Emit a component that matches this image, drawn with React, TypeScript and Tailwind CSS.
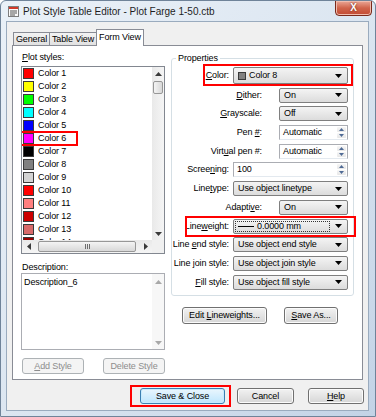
import React from "react";

const PLOT_STYLES = [
  { name: "Color 1", color: "#ff0000" },
  { name: "Color 2", color: "#ffff00" },
  { name: "Color 3", color: "#00ff00" },
  { name: "Color 4", color: "#00ffff" },
  { name: "Color 5", color: "#0000ff" },
  { name: "Color 6", color: "#ff00ff" },
  { name: "Color 7", color: "#000000" },
  { name: "Color 8", color: "#808080" },
  { name: "Color 9", color: "#d3d3d3" },
  { name: "Color 10", color: "#ff0000" },
  { name: "Color 11", color: "#ff7f7f" },
  { name: "Color 12", color: "#cc0000" },
  { name: "Color 13", color: "#d86a6a" },
  { name: "Color 14", color: "#990000" },
];

function Tri({ dir, color = "#3a3a3a" }: { dir: "up" | "down" | "left" | "right"; color?: string }) {
  const d = {
    up: "M0 4h7L3.5 0z",
    down: "M0 0h7L3.5 4z",
    left: "M4 0v7L0 3.5z",
    right: "M0 0v7L4 3.5z",
  }[dir];
  const vertical = dir === "up" || dir === "down";
  return (
    <svg width={vertical ? 7 : 4} height={vertical ? 4 : 7} viewBox={vertical ? "0 0 7 4" : "0 0 4 7"}>
      <path d={d} fill={color} />
    </svg>
  );
}

function Combo({ children }: { children?: React.ReactNode }) {
  return (
    <div className="flex h-full items-center rounded-[2px] border border-[#7f7f7f] bg-gradient-to-b from-[#f4f4f4] to-[#dcdcdc] pl-[4px] pr-[5px]">
      <div className="flex min-w-0 flex-1 items-center whitespace-nowrap">{children}</div>
      <Tri dir="down" color="#000" />
    </div>
  );
}

function SpinEdit({ value }: { value: string }) {
  return (
    <div className="flex h-full border border-[#abadb3] border-b-[#e3e9ef] bg-white">
      <span className="flex flex-1 items-center pl-[3px]">{value}</span>
      <div className="flex w-[11px] flex-col gap-px p-px">
        <div className="flex flex-1 items-center justify-center rounded-[1px] bg-gradient-to-b from-[#f6f6f6] to-[#e6e6e6]">
          <svg width="5" height="3" viewBox="0 0 5 3"><path d="M0 3h5L2.5 0z" fill="#4f6a95" /></svg>
        </div>
        <div className="flex flex-1 items-center justify-center rounded-[1px] bg-gradient-to-b from-[#f6f6f6] to-[#e6e6e6]">
          <svg width="5" height="3" viewBox="0 0 5 3"><path d="M0 0h5L2.5 3z" fill="#4f6a95" /></svg>
        </div>
      </div>
    </div>
  );
}

function Row({
  label,
  wide,
  tall,
  children,
  mark,
}: {
  label: React.ReactNode;
  wide?: boolean;
  tall?: boolean;
  children: React.ReactNode;
  mark?: React.ReactNode;
}) {
  return (
    <div className={`relative flex items-center pr-[5px] ${tall ? "h-[17px]" : "h-[15px]"}`}>
      <span className={`flex-1 whitespace-nowrap text-right ${wide ? "mr-[4px]" : "mr-[17px]"}`}>{label}</span>
      <div className={`h-full ${wide ? "w-[115px]" : "w-[69px]"}`}>{children}</div>
      {mark}
    </div>
  );
}

function Button({
  children,
  className = "",
  disabled,
  primary,
}: {
  children: React.ReactNode;
  className?: string;
  disabled?: boolean;
  primary?: boolean;
}) {
  const look = disabled
    ? "border-[#adb2b5] bg-[#f4f4f4] text-[#8d8d8d]"
    : primary
    ? "border-[#3c7fb1] bg-gradient-to-b from-[#eaf6fd] to-[#bee6fd] shadow-[inset_0_0_0_1px_#c7ecff]"
    : "border-[#707070] bg-gradient-to-b from-[#f2f2f2] to-[#d6d6d6] shadow-[inset_0_0_0_1px_#fbfbfb]";
  return (
    <div className={`flex items-center justify-center whitespace-nowrap rounded-[3px] border ${look} ${className}`}>
      {children}
    </div>
  );
}

export default function App() {
  return (
    <div className="flex h-[417px] w-[376px] flex-col overflow-hidden rounded-t-[6px] border border-[#6f8399] bg-gradient-to-br from-[#eaf1f8] via-[#dce6f1] to-[#c3d3e6] font-['Liberation_Sans',Arial,sans-serif] text-[9px] leading-[11px] tracking-[-0.12px] text-black [font-variant-ligatures:none]">
      {/* title bar */}
      <div className="flex h-[20px] shrink-0 items-start">
        <svg className="ml-[7px] mt-[5px]" width="11" height="11" viewBox="0 0 11 11">
          <rect x="0.5" y="0.5" width="10" height="10" fill="#fafafa" stroke="#7d7d7d" />
          <rect x="1" y="1" width="9" height="2" fill="#d23a2a" />
          <path d="M2 5h7M2 7h7M2 9h5" stroke="#555" strokeWidth="1" />
        </svg>
        <span className="ml-[4px] mt-[5px] whitespace-nowrap text-[10px] tracking-normal text-[#1e1e1e]">
          Plot Style Table Editor - Plot Farge 1-50.ctb
        </span>
        <div className="ml-auto mr-[3px] -mt-px flex h-[16px] w-[37px] items-center justify-center rounded-b-[4px] border border-[#7a2a1c] bg-gradient-to-b from-[#e9a797] via-[#d0644b] to-[#c24a33] shadow-[inset_0_0_0_1px_#f0bcae]">
          <span className="text-[10px] font-bold leading-none text-white [text-shadow:0_0_2px_#5a1a10]">X</span>
        </div>
      </div>

      {/* client area */}
      <div className="mb-[5px] ml-[5px] mr-[6px] flex flex-1 flex-col border border-[#9aabbe] bg-[#f0f0f0]">
        {/* tabs */}
        <div className="flex items-end pl-[6px] pt-[7px]">
          <div className="flex h-[13px] w-[37px] items-center justify-center border border-b-0 border-[#898c95] bg-gradient-to-b from-[#f3f3f3] to-[#e1e1e1]">
            General
          </div>
          <div className="-ml-px flex h-[13px] w-[48px] items-center justify-center border border-b-0 border-[#898c95] bg-gradient-to-b from-[#f3f3f3] to-[#e1e1e1]">
            Table View
          </div>
          <div className="relative z-10 -mb-px -ml-px flex h-[17px] w-[48px] items-center justify-center border border-b-0 border-[#898c95] bg-white pb-[2px]">
            Form View
          </div>
        </div>

        {/* tab panel */}
        <div className="ml-[5px] mr-[5px] flex h-[335px] border border-[#898c95] bg-white pl-[8px]">
          {/* left column */}
          <div className="flex w-[144px] flex-col">
            <div className="mt-[6px] pl-px">
              <u>P</u>lot styles:
            </div>
            <div className="mt-[3px] flex h-[188px] flex-col border border-[#828790] bg-white">
              <div className="flex min-h-0 flex-1">
                <div className="flex min-w-0 flex-1 flex-col overflow-hidden">
                  {PLOT_STYLES.map((s) => (
                    <div key={s.name} className="relative flex h-[13px] shrink-0 items-center pl-px">
                      <span
                        className="h-[11px] w-[11px] shrink-0 border border-[#3a3a3a]"
                        style={{ backgroundColor: s.color }}
                      />
                      <span className="ml-[4px] whitespace-nowrap">{s.name}</span>
                      {s.name === "Color 6" && (
                        <span className="pointer-events-none absolute -left-[4px] -top-px h-[15px] w-[60px] border-2 border-[#f00]" />
                      )}
                    </div>
                  ))}
                </div>
                {/* vertical scrollbar */}
                <div className="flex w-[12px] flex-col bg-gradient-to-r from-[#e9e9e9] to-[#f5f5f5]">
                  <div className="flex h-[13px] items-center justify-center">
                    <Tri dir="up" />
                  </div>
                  <div className="mx-px mt-px h-[13px] rounded-[2px] border border-[#979797] bg-gradient-to-r from-[#f4f4f4] to-[#d8d8d8]" />
                  <div className="flex-1" />
                  <div className="flex h-[13px] items-center justify-center">
                    <Tri dir="down" />
                  </div>
                </div>
              </div>
              {/* horizontal scrollbar */}
              <div className="flex h-[13px]">
                <div className="flex flex-1 items-center bg-gradient-to-b from-[#e9e9e9] to-[#f5f5f5]">
                  <div className="flex w-[13px] items-center justify-center">
                    <Tri dir="left" />
                  </div>
                  <div className="ml-[3px] flex h-[11px] w-[98px] items-center justify-center rounded-[2px] border border-[#979797] bg-gradient-to-b from-[#f4f4f4] to-[#d8d8d8]">
                    <svg width="5" height="5" viewBox="0 0 5 5">
                      <path d="M0.5 0v5M2.5 0v5M4.5 0v5" stroke="#6d6d6d" />
                    </svg>
                  </div>
                  <div className="flex-1" />
                  <div className="flex w-[13px] items-center justify-center">
                    <Tri dir="right" />
                  </div>
                </div>
                <div className="w-[12px] bg-[#f0f0f0]" />
              </div>
            </div>

            <div className="mt-[8px] pl-px">Description:</div>
            <div className="flex h-[77px] border border-[#abadb3] bg-white">
              <div className="flex-1 pl-[2px] pt-[3px]">Description_6</div>
              <div className="flex w-[12px] flex-col bg-[#f7f7f7]">
                <div className="flex h-[13px] items-center justify-center pt-[2px]">
                  <Tri dir="up" color="#a8a8a8" />
                </div>
                <div className="flex-1" />
                <div className="flex h-[13px] items-center justify-center">
                  <Tri dir="down" color="#a8a8a8" />
                </div>
              </div>
            </div>

            <div className="mt-[8px] flex justify-between pl-px">
              <Button disabled className="h-[16px] w-[62px]">
                <span>
                  <u>A</u>dd Style
                </span>
              </Button>
              <Button disabled className="h-[16px] w-[62px]">
                Delete Style
              </Button>
            </div>
          </div>

          {/* right column */}
          <div className="ml-[6px] flex w-[183px] flex-col">
            <fieldset className="mt-[7px] rounded-[3px] border border-[#d5dfe5] pb-[5px] pt-[3px]">
              <legend className="ml-[4px] px-[2px]">Properties</legend>
              <div className="flex flex-col gap-[3.7px]">
                <Row
                  wide
                  tall
                  label={
                    <>
                      <u>C</u>olor:
                    </>
                  }
                  mark={<span className="pointer-events-none absolute -bottom-[2px] left-[31px] -top-[3px] right-0 border-2 border-[#f00]" />}
                >
                  <Combo>
                    <span className="h-[8px] w-[8px] shrink-0 border border-[#3a3a3a] bg-[#808080]" />
                    <span className="ml-[3px]">Color 8</span>
                  </Combo>
                </Row>
                <Row
                  label={
                    <>
                      <u>D</u>ither:
                    </>
                  }
                >
                  <Combo>On</Combo>
                </Row>
                <Row
                  label={
                    <>
                      <u>G</u>rayscale:
                    </>
                  }
                >
                  <Combo>Off</Combo>
                </Row>
                <Row
                  label={
                    <>
                      Pen <u>#</u>:
                    </>
                  }
                >
                  <SpinEdit value="Automatic" />
                </Row>
                <Row
                  label={
                    <>
                      Virt<u>u</u>al pen #:
                    </>
                  }
                >
                  <SpinEdit value="Automatic" />
                </Row>
                <Row
                  wide
                  label={
                    <>
                      Scree<u>n</u>ing:
                    </>
                  }
                >
                  <SpinEdit value="100" />
                </Row>
                <Row
                  wide
                  label={
                    <>
                      Line<u>t</u>ype:
                    </>
                  }
                >
                  <Combo>Use object linetype</Combo>
                </Row>
                <Row
                  label={
                    <>
                      Adapti<u>v</u>e:
                    </>
                  }
                >
                  <Combo>On</Combo>
                </Row>
                <Row
                  wide
                  label={
                    <>
                      Line<u>w</u>eight:
                    </>
                  }
                  mark={<span className="pointer-events-none absolute -bottom-[3px] left-[13px] -right-[3px] -top-[3px] border-2 border-[#f00]" />}
                >
                  <div className="flex h-full items-center rounded-[2px] border border-[#7f7f7f] bg-gradient-to-b from-[#f4f4f4] to-[#dcdcdc] p-[1px] pr-[5px]">
                    <div className="flex h-full flex-1 items-center border border-dotted border-[#333] pl-[2px]">
                      <span className="h-px w-[16px] bg-black" />
                      <span className="ml-[3px]">0.0000 mm</span>
                    </div>
                    <span className="ml-[5px] flex">
                      <Tri dir="down" color="#000" />
                    </span>
                  </div>
                </Row>
                <Row
                  wide
                  label={
                    <>
                      Line <u>e</u>nd style:
                    </>
                  }
                >
                  <Combo>Use object end style</Combo>
                </Row>
                <Row
                  wide
                  label={
                    <>
                      Line <u>j</u>oin style:
                    </>
                  }
                >
                  <Combo>Use object join style</Combo>
                </Row>
                <Row
                  wide
                  label={
                    <>
                      <u>F</u>ill style:
                    </>
                  }
                >
                  <Combo>Use object fill style</Combo>
                </Row>
              </div>
            </fieldset>
            <div className="mt-[11px] flex gap-[17px] pl-[11px]">
              <Button className="h-[17px] w-[85px]">
                <span>
                  Edit <u>L</u>ineweights...
                </span>
              </Button>
              <Button className="h-[17px] w-[54px]">
                <span>
                  <u>S</u>ave As...
                </span>
              </Button>
            </div>
          </div>
        </div>

        {/* dialog buttons */}
        <div className="mt-[8px] flex justify-end pr-[4px]">
          <div className="relative">
            <Button primary className="h-[16px] w-[85px]">
              Save &amp; Close
            </Button>
            <span className="pointer-events-none absolute -bottom-[3px] -left-[10px] -right-[6px] -top-[3px] border-2 border-[#f00]" />
          </div>
          <Button className="ml-[12px] h-[16px] w-[57px]">Cancel</Button>
          <Button className="ml-[14px] h-[16px] w-[56px]">
            <span>
              <u>H</u>elp
            </span>
          </Button>
        </div>
      </div>
    </div>
  );
}
